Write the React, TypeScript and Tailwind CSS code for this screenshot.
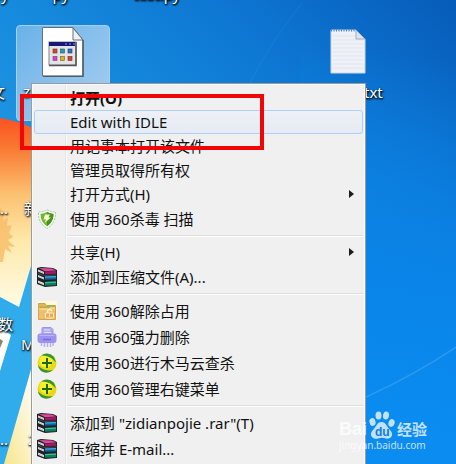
import type { ReactNode } from "react";

type Item = {
  label: string;
  icon?: ReactNode;
  bold?: boolean;
  active?: boolean;
  submenu?: boolean;
};

function Wallpaper() {
  return (
    <svg className="absolute inset-0 h-full w-full" viewBox="0 0 456 464" preserveAspectRatio="xMinYMin slice" aria-hidden="true">
      <defs>
        <linearGradient id="sky" gradientUnits="userSpaceOnUse" x1="120" y1="330" x2="456" y2="0">
          <stop offset="0" stopColor="#2299e3" />
          <stop offset="0.35" stopColor="#1589dc" />
          <stop offset="0.65" stopColor="#0d76d2" />
          <stop offset="1" stopColor="#075cb9" />
        </linearGradient>
        <linearGradient id="glow" gradientUnits="userSpaceOnUse" x1="366" y1="420" x2="430" y2="60">
          <stop offset="0" stopColor="#0a8cf1" />
          <stop offset="0.4" stopColor="#0a84e8" />
          <stop offset="1" stopColor="#0a84e8" stopOpacity="0" />
        </linearGradient>
        <linearGradient id="petal" x1="0" y1="0" x2="0" y2="1">
          <stop offset="0" stopColor="#fb5222" />
          <stop offset="0.15" stopColor="#f97730" />
          <stop offset="0.4" stopColor="#fcc070" />
          <stop offset="0.65" stopColor="#fee9aa" />
          <stop offset="1" stopColor="#fffbe6" />
        </linearGradient>
        <linearGradient id="yellow" x1="1" y1="0" x2="0" y2="1">
          <stop offset="0" stopColor="#ffffff" />
          <stop offset="1" stopColor="#f8e58a" />
        </linearGradient>
      </defs>
      <rect width="456" height="464" fill="url(#sky)" />
      <rect x="300" width="156" height="464" fill="url(#glow)" />
      <rect y="240" width="40" height="224" fill="#30aced" />
      <path d="M0 118 Q18 120 40 132 V240 L31 266 L19 307 L0 297Z" fill="url(#petal)" />
      <path d="M0 207 L4 213 L3 221 L8 217 L7 226 L12 225 L9 233 L13 237 L8 240 L15 247 L8 246 L12 253 L5 249 L3 262 L0 262Z" fill="#f7b65f" opacity="0.7" />
      <path d="M0 328 L11 335 L0 371Z" fill="#fff" />
      <path d="M0 339 L3 341 L0 348Z" fill="#8d8170" />
      <path d="M32 366 V464 H4 Z" fill="url(#yellow)" />
      <path d="M366 397 Q416 374 456 347" stroke="#4eacf4" strokeWidth="1.500" fill="none" opacity="0.5" />
      <path d="M250 83 Q270 43 302 3" stroke="#49a0ea" fill="none" opacity="0.2" />
    </svg>
  );
}

function ProgramFile() {
  return (
    <svg width="42" height="50" viewBox="0 0 42 50" aria-hidden="true">
      <path d="M1.500 .5H31L41 13V49H.5V.5Z" fill="#fff" stroke="#66707a" />
      <path d="M31 1V13H41Z" fill="#edf1f5" stroke="#66707a" />
      <path d="M41 13V49.500H1" fill="none" stroke="#535b62" strokeWidth="1.500" />
      <rect x="7" y="15" width="27" height="23" fill="#e4e4e6" stroke="#84858c" />
      <path d="M34 15V38.500H7" fill="none" stroke="#4f5158" strokeWidth="1.500" />
      <rect x="7" y="15" width="26" height="4" fill="#17177a" />
      <path d="M23 17H25M27 17H29M31 17H33" stroke="#8f98cf" />
      <g strokeWidth="0.6">
        <rect x="11" y="22" width="4" height="4" fill="#dc4432" stroke="#653531" />
        <rect x="18.500" y="22" width="4" height="4" fill="#249eaa" stroke="#25555f" />
        <rect x="26" y="22" width="4" height="4" fill="#316fd1" stroke="#253668" />
        <rect x="11" y="29.500" width="4" height="4" fill="#d840c5" stroke="#72406c" />
        <rect x="18.500" y="29.500" width="4" height="4" fill="#d6b525" stroke="#6e6327" />
        <rect x="26" y="29.500" width="4" height="4" fill="#d64338" stroke="#6e2929" />
      </g>
    </svg>
  );
}

function TextFile() {
  return (
    <svg width="36" height="45" viewBox="0 0 36 45" aria-hidden="true">
      <path d="M1 1H26L35 10V44H1Z" fill="#eef2f8" stroke="#c7d8eb" />
      <path d="M3 7H25M3 11H33M3 15H33M3 19H33M3 23H33M3 27H33M3 31H33M3 35H33M3 39H33" stroke="#dfe4ed" />
      <path d="M1 1.500H26" stroke="#4b7ebb" strokeWidth="2" strokeDasharray="1 1.500" />
      <path d="M26 1V10H35Z" fill="#dfe4ec" stroke="#9eacbd" />
    </svg>
  );
}

function ShieldIcon() {
  return (
    <svg width="20" height="20" viewBox="0 0 20 20" aria-hidden="true">
      <path d="M10 .8 Q14 3 18.500 3 Q19 14 10 19.500 Q1 14 1.500 3 Q6 3 10 .8Z" fill="#f5faf0" stroke="#8fb89a" strokeWidth=".8" strokeDasharray="2 1" />
      <path d="M10 3 Q13 4.700 16.500 5 Q16.500 13 10 17.300 Q3.500 13 3.500 5 Q7 4.700 10 3Z" fill="#74b531" />
      <path d="M10 3 Q13 4.700 16.500 5 Q16.500 13 10 17.300Z" fill="#4c9420" />
      <path d="M8 5.500H13L11.500 8.500H14L7.500 14L9 10.500H6.500Z" fill="#f2fbd2" />
    </svg>
  );
}

function BooksIcon() {
  return (
    <svg width="20" height="20" viewBox="0 0 20 20" aria-hidden="true">
      <path d="M0 1L4 0L16 1L20 3V19L8 20L0 17Z" fill="#1c2226" />
      <path d="M2 1L15 1.500L19 3.500L8 4.200Z" fill="#e0489a" />
      <path d="M8 4.500L19 4V6.800L8 7.300Z" fill="#9c1a66" />
      <path d="M1 2.500L7 5V7L1 4.500Z" fill="#f4f4f4" />
      <path d="M1 5.500L7 8L19 7.500V8.500L8 9L1 7Z" fill="#41474c" />
      <path d="M8 9.500L19 9V12.300L8 12.800Z" fill="#145f9f" />
      <path d="M8 9.500L19 9V10.300L8 10.800Z" fill="#3eaedb" />
      <path d="M1 8L7 10.500V12.500L1 10Z" fill="#f4f4f4" />
      <path d="M8 15L19 14.500V18.200L8 18.800Z" fill="#0c7f5c" />
      <path d="M8 15L19 14.500V15.800L8 16.300Z" fill="#3fc08e" />
      <path d="M1 13.500L7 16V18.200L1 15.800Z" fill="#f4f4f4" />
      <path d="M1 3.500L7 6M1 9L7 11.500M1 14.700L7 17.200" stroke="#8b8f92" strokeWidth=".5" />
    </svg>
  );
}

function FolderIcon() {
  return (
    <svg width="20" height="20" viewBox="0 0 20 20" aria-hidden="true">
      <rect x="1" y="0" width="19" height="19" fill="#fff9df" />
      <path d="M1.500 18V2.500H8L9.500 4.500H18.500V18Z" fill="#e4b653" stroke="#d0a24a" />
      <path d="M3 5.500H10L11.500 4H18V7H3Z" fill="#98b947" />
      <path d="M1.500 7H12L13 6H18.500V18.500H1.500Z" fill="#eec06c" stroke="#d9a04a" />
      <path d="M2 8H12L13 7H18" stroke="#ffe9b5" fill="none" />
      <path d="M10.500 12V10Q13 7 15 10" fill="none" stroke="#fff7d7" strokeWidth="1.500" />
      <rect x="8.500" y="12" width="8" height="5" rx="1" fill="#eba951" stroke="#fff2c5" />
      <path d="M12.500 13.500V15.500" stroke="#fff" />
    </svg>
  );
}

function ShredderIcon() {
  return (
    <svg width="20" height="20" viewBox="0 0 20 20" aria-hidden="true">
      <path d="M5 1.500Q5 .5 6 .5H14L16 2.500V9H5Z" fill="#b4aaf2" stroke="#9d92e6" />
      <path d="M7 3H13M7 5.500H14" stroke="#e5e1ff" />
      <path d="M3 6.500H17Q19.500 6.500 19.500 9V13Q19.500 16 17 16H3Q.5 16 .5 13V9Q.5 6.500 3 6.500Z" fill="#9c92f0" />
      <path d="M2.500 8.500H17.500" stroke="#bbb4fb" />
      <path d="M6 12.500H14" stroke="#746cd2" strokeWidth="1.500" />
      <path d="M4.500 16V19M7.500 16V20M10.500 16V20M13.500 16V20M16 16V19" stroke="#b5adf4" strokeWidth="1.500" />
    </svg>
  );
}

function PlusIcon() {
  return (
    <svg width="20" height="20" viewBox="0 0 20 20" aria-hidden="true">
      <circle cx="10" cy="10" r="9.500" fill="#e9d914" />
      <circle cx="9" cy="8" r="6.500" fill="#fbee2a" />
      <path d="M4 2.500Q11-2 17 4L19 9.500Q13 2 4 2.500Z" fill="#349536" />
      <path d="M1 12Q6 19 16 17Q10 22 4 18Q1 15 1 12Z" fill="#349536" />
      <path d="M10 5V15M5 10H15" stroke="#17691c" strokeWidth="2" />
    </svg>
  );
}

const groups: Item[][] = [
  [
    { label: "打开(O)", bold: true },
    { label: "Edit with IDLE", active: true },
    { label: "用记事本打开该文件" },
    { label: "管理员取得所有权" },
    { label: "打开方式(H)", submenu: true },
    { label: "使用 360杀毒 扫描", icon: <ShieldIcon /> },
  ],
  [
    { label: "共享(H)", submenu: true },
    { label: "添加到压缩文件(A)...", icon: <BooksIcon /> },
  ],
  [
    { label: "使用 360解除占用", icon: <FolderIcon /> },
    { label: "使用 360强力删除", icon: <ShredderIcon /> },
    { label: "使用 360进行木马云查杀", icon: <PlusIcon /> },
    { label: "使用 360管理右键菜单", icon: <PlusIcon /> },
  ],
  [
    { label: "添加到 \"zidianpojie .rar\"(T)", icon: <BooksIcon /> },
    { label: "压缩并 E-mail...", icon: <BooksIcon /> },
  ],
];

function MenuItem({ item }: { item: Item }) {
  return (
    <button
      type="button"
      role="menuitem"
      className={`flex w-full items-center rounded-[3px] border text-left ${item.icon ? "h-[26px]" : "h-6"} ${
        item.active ? "border-[#aecff7] bg-linear-to-b from-[#edf1f7]/80 to-[#e3eaf5]/80" : "border-transparent"
      }`}
    >
      <span className="flex w-[35px] shrink-0 pl-0.5">{item.icon}</span>
      <span className={`grow whitespace-nowrap ${item.bold ? "font-bold" : ""}`}>{item.label}</span>
      {item.submenu && (
        <svg className="mr-2" width="5" height="8" viewBox="0 0 5 8" aria-hidden="true">
          <path d="M0 0L5 4L0 8Z" fill="#1b1b1b" />
        </svg>
      )}
    </button>
  );
}

function ContextMenu() {
  return (
    <div role="menu" className="absolute top-[83px] left-[31px] w-[335px] border border-[#9a9b9d] bg-[#f0f0f0] px-0.5 pt-0.5 pb-8 shadow-[inset_0_0_0_1px_#f9f9f9] bg-[linear-gradient(to_right,transparent_33px,#e4e5e6_33px,#e4e5e6_34px,#fafafa_34px,#fafafa_35px,transparent_35px)]">
      {groups.map((group, i) => (
        <div key={i}>
          {i > 0 && (
            <div className="flex h-2 items-center pl-[33px]">
              <hr className="h-0.5 grow border-t border-b border-t-[#dedede] border-b-white" />
            </div>
          )}
          {group.map((item) => (
            <MenuItem key={item.label} item={item} />
          ))}
        </div>
      ))}
    </div>
  );
}

function Watermark() {
  return (
    <div className="absolute top-[411px] left-[339px] flex flex-col text-white opacity-75">
      <div className="flex h-7 items-end gap-0.5">
        <span className="font-['Liberation_Sans',sans-serif] text-[18px] leading-5 font-bold">Bai</span>
        <svg width="26" height="28" viewBox="0 0 26 28" aria-hidden="true">
          <g fill="#fff">
            <ellipse cx="3.500" cy="11" rx="3" ry="4" transform="rotate(-15 3.500 11)" />
            <ellipse cx="9.500" cy="4.500" rx="3" ry="4" />
            <ellipse cx="17" cy="4.500" rx="3" ry="4" transform="rotate(12 17 4.500)" />
            <ellipse cx="22.500" cy="12" rx="3" ry="4" transform="rotate(18 22.500 12)" />
            <path d="M12.500 11C17 11 18 16 21 19C26 24 21 29 17 27.500Q13 26 9 27.500C4 29-1 24 4 19C7 16 8 11 12.500 11Z" />
          </g>
          <text x="6" y="25" fontSize="12" fontWeight="bold" fill="#0a78d8" fontFamily="Liberation Sans, sans-serif">du</text>
        </svg>
        <span className="font-['Noto_Sans_CJK_SC',sans-serif] text-[15px] leading-5 font-bold">经验</span>
      </div>
      <span className="font-['Noto_Sans',sans-serif] text-[10px] leading-3">jingyan.baidu.com</span>
    </div>
  );
}

const caption = "whitespace-nowrap text-white [text-shadow:1px_1px_2px_#000,0_1px_2px_#000]";

export default function App() {
  return (
    <main className="relative h-screen overflow-hidden bg-[#0f79d4] font-['Noto_Sans','Noto_Sans_CJK_SC',sans-serif] text-[15px] leading-5 text-[#111]">
      <Wallpaper />

      {/* desktop shortcuts */}
      <div className="absolute -top-4 -left-2 flex gap-11">
        <span className={caption}>py</span>
        <span className={caption}>py</span>
        <span className={`${caption} pl-5`}>test.py</span>
      </div>

      <div className="absolute top-[25px] left-4 flex h-24 w-[94px] flex-col gap-1 rounded-sm border border-[#a5d0f3] bg-linear-to-br from-[#69b2e9] to-[#a8cff0]">
        <div className="flex justify-center pt-px">
          <ProgramFile />
        </div>
        <span className={`${caption} pl-1.5`}>z</span>
      </div>

      <div className="absolute top-[29px] left-[330px] flex flex-col gap-2">
        <TextFile />
        <span className={`${caption} pl-[30px]`}>.txt</span>
      </div>

      <div className="absolute top-[82px] -left-2.5 flex flex-col">
        <span className={caption}>文</span>
        <div className="flex gap-4 pt-24">
          <span className={`${caption} pl-1.5`}>...</span>
          <span className={caption}>新</span>
        </div>
        <span className={`${caption} pt-24 pl-2`}>数</span>
        <span className={`${caption} pl-[31px]`}>M</span>
        <div className="flex gap-5 pt-[75px]">
          <span className={`${caption} pl-1.5`}>...</span>
          <span className={caption}>2</span>
        </div>
      </div>

      <ContextMenu />
      <div className="pointer-events-none absolute top-[94px] left-5 h-14 w-[244px] border-4 border-[#f00606]" />
      <Watermark />
    </main>
  );
}
